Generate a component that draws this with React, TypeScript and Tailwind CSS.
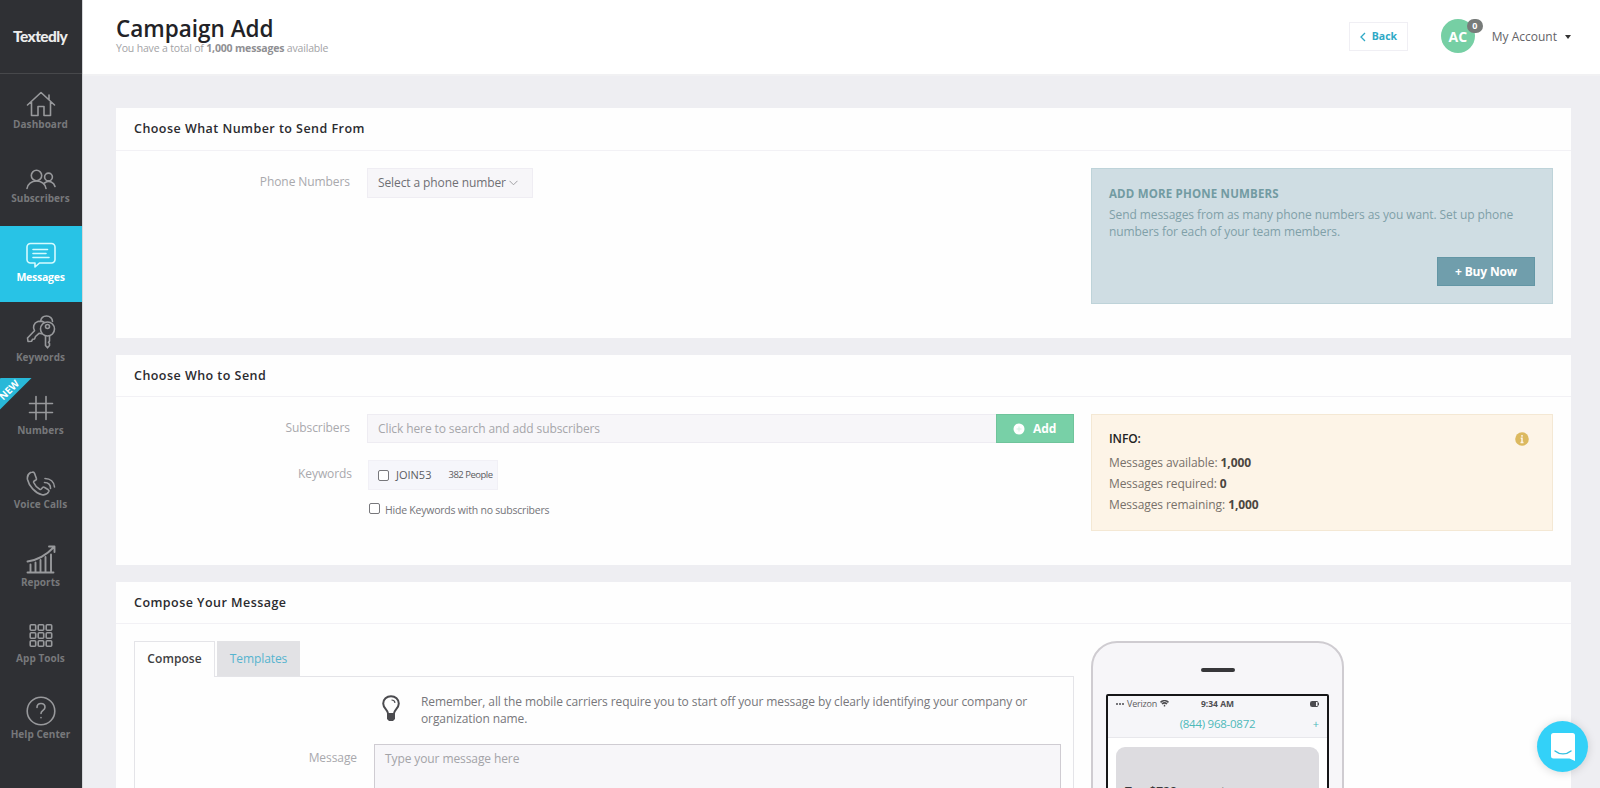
import { ReactNode } from 'react';
import clsx from 'clsx';

type NavItem = {
  label: string;
  icon: ReactNode;
  active?: boolean;
  isNew?: boolean;
  pad: string;
  gap: string;
};

const Line = ({ w = 30, h, sw = 1.6, children }: { w?: number; h: number; sw?: number; children: ReactNode }) => (
  <svg width={w} height={h} viewBox={`0 0 ${w} ${h}`} fill="none" stroke="currentColor" strokeWidth={sw} strokeLinecap="round" strokeLinejoin="round">
    {children}
  </svg>
);

const dots = [0, 8, 16];

const nav: NavItem[] = [
  {
    label: 'Dashboard',
    pad: 'pt-[17px]',
    gap: 'mt-0',
    icon: (
      <Line h={26}>
        <path d="M1.5 14 15 1.5 28.500 14M5.500 11v13.500h6.500v-9h6v9h6.500V11M23 8.500V4" />
      </Line>
    ),
  },
  {
    label: 'Subscribers',
    pad: 'pt-[19px]',
    gap: 'mt-[1px]',
    icon: (
      <Line h={21}>
        <circle cx="10.500" cy="6.500" r="5.200" />
        <circle cx="22.500" cy="8" r="3.900" />
        <path d="M1 19.500c.5-4.500 4.500-7.500 9.500-7.500s9 3 9.500 7.500M18.500 14c5-3.500 9.500-.5 10.500 3.500" />
      </Line>
    ),
  },
  {
    label: 'Messages',
    active: true,
    pad: 'pt-[16px]',
    gap: 'mt-[1px]',
    icon: (
      <Line h={27}>
        <path d="M4.500 1.500h21a3.500 3.500 0 0 1 3.500 3.500v12.500a3.500 3.500 0 0 1-3.500 3.500H13.500l-4.500 4v-4H4.500A3.500 3.500 0 0 1 1 17.500V5a3.500 3.500 0 0 1 3.500-3.500z" />
        <path d="M7 7.500h14.500M7 11.500h13M7 15.500h16" />
      </Line>
    ),
  },
  {
    label: 'Keywords',
    pad: 'pt-[12px]',
    gap: 'mt-[1px]',
    icon: (
      <Line h={35}>
        <circle cx="21.500" cy="15" r="7" />
        <circle cx="21.500" cy="12.500" r="2" />
        <path d="M19.500 22v9.500l2 2.300 2-2.300v-2l-1-1 1-1.500V22M14.500 7.500c.5-3.500 3-5.500 6-5.500 3.500 0 6 2.500 6 5.500M18 8.200C14 6 9 7.500 7.800 11.500c-.6 2-.3 3.500.7 5.200L1.500 24l.5 3.500 3.500-.2 1-2 2-.3 1-2.500 3.500-3.200 2.500.5" />
      </Line>
    ),
  },
  {
    label: 'Numbers',
    isNew: true,
    pad: 'pt-[17px]',
    gap: 'mt-[2px]',
    icon: (
      <Line h={26}>
        <path d="M10 1.500v23M20 1.500v23M3.500 8.500h23M3.500 17.500h23" />
      </Line>
    ),
  },
  {
    label: 'Voice Calls',
    pad: 'pt-[17px]',
    gap: 'mt-[1px]',
    icon: (
      <Line h={25}>
        <path d="M4.500 1.500C2 3 1 5.500 1.500 8.500c1.500 6.500 7.500 13.500 14.500 15.200 3 .6 5.500-.7 6.800-3.200.3-.7.1-1.300-.5-1.700l-4-2.500c-.6-.4-1.300-.3-1.700.2l-1.300 1.500c-.4.5-1 .6-1.600.3-2.700-1.500-4.800-4-6-6.800-.2-.6 0-1.200.5-1.500l1.600-1c.6-.4.8-1 .5-1.700L8.500 2.200c-.4-.9-1.500-1.200-2.300-.9zM18.500 11.500c4 0 6.200 2.200 6 6M19 7.500c5.500 0 9 3.500 9.500 8.500" />
      </Line>
    ),
  },
  {
    label: 'Reports',
    pad: 'pt-[15px]',
    gap: 'mt-[1px]',
    icon: (
      <Line h={29} sw={1.9}>
        <path d="M1.500 27.500h26M4.500 27v-7.500M9.500 27v-9.500M14.500 27V15M19.500 27v-15M25 27V9.500M1.500 16.500C12 15 20 10.500 28 2M23 1.500h5.500V7" />
      </Line>
    ),
  },
  {
    label: 'App Tools',
    pad: 'pt-[17px]',
    gap: 'mt-[3px]',
    icon: (
      <Line h={25}>
        {dots.map((y) => dots.map((x) => <rect key={`${x}-${y}`} x={x + 4.2} y={y + 1.7} width="5.500" height="5.500" rx="1" />))}
      </Line>
    ),
  },
  {
    label: 'Help Center',
    pad: 'pt-[14px]',
    gap: 'mt-[1px]',
    icon: (
      <Line h={30}>
        <circle cx="15" cy="15" r="13.800" />
        <path d="M11 11.500c0-2.500 1.800-4 4-4s4 1.500 4 3.800c0 3-4 3.200-4 6.200M15 21.500v.3" />
      </Line>
    ),
  },
];

function Sidebar() {
  return (
    <aside className="flex h-full w-[83px] shrink-0 flex-col border-r border-[#d5d7da] bg-[#2f3034]">
      <div className="flex h-[74px] shrink-0 items-center border-b border-[#47484b] pl-[13px] pt-[1px]">
        <span className="font-['Lato'] text-[15.5px] font-black tracking-[-0.6px] text-[#ececec]">Textedly</span>
      </div>
      {nav.map((item) => (
        <a
          key={item.label}
          className={clsx(
            'relative flex h-[76px] shrink-0 flex-col items-center overflow-hidden pr-[1px]',
            item.pad,
            item.active ? 'bg-[#28c3e6] text-[#d5fbff]' : 'text-[#98999c]',
          )}
        >
          {item.isNew && (
            <span className="absolute -left-[27px] top-[-3px] flex h-[22px] w-[70px] -rotate-45 items-end justify-center bg-[#28b8d8] pb-[2px] pr-[4px] text-[10px] font-bold leading-[12px] text-white">
              NEW
            </span>
          )}
          {item.icon}
          <span className={clsx('whitespace-nowrap font-bold leading-[15px]', item.gap, item.active ? 'text-[10.5px] tracking-[-0.25px] text-white' : 'text-[10px] tracking-[0.05px] text-[#77787b]')}>
            {item.label}
          </span>
        </a>
      ))}
    </aside>
  );
}

function Header() {
  return (
    <header className="flex h-[74px] shrink-0 items-start bg-white pl-[33px] pr-[29px]">
      <div className="flex-1 pt-[15px]">
        <h1 className="text-[22.5px] font-semibold leading-[27px] text-[#222226]">Campaign Add</h1>
        <p className="-mt-[1px] text-[10.5px] leading-[14px] tracking-[-0.17px] text-[#a3a3a6]">
          You have a total of <b className="text-[#8f8f93]">1,000 messages</b> available
        </p>
      </div>
      <a className="mt-[22px] flex h-[29px] w-[59px] items-center border border-[#f0eff4] pl-[10px] text-[10.5px] font-bold text-[#2fa9c6]">
        <svg width="6" height="10" viewBox="0 0 6 10" fill="none" stroke="currentColor" strokeWidth="1.300" className="mr-[6px]">
          <path d="M5 1 1 5l4 4" />
        </svg>
        Back
      </a>
      <div className="relative ml-[33px] mt-[19px] flex size-[34px] items-center justify-center rounded-full bg-[#76cfa4] text-[14px] font-bold text-white">
        AC
        <span className="absolute top-0 left-[26px] flex h-[14px] w-[16px] items-center justify-center rounded-full bg-[#777b79] text-[9px] font-bold">0</span>
      </div>
      <div className="mt-[28px] flex items-center pl-[17px] text-[12px] leading-[18px] text-[#636367]">
        My Account
        <span className="ml-[8px] border-x-[3.5px] border-t-4 border-x-transparent border-t-[#333]" />
      </div>
    </header>
  );
}

type CardProps = { title: string; className?: string; headClassName?: string; children: ReactNode };

function Card({ title, className, headClassName = 'h-[42px]', children }: CardProps) {
  return (
    <section className={clsx('flex shrink-0 flex-col bg-[#fefefe]', className)}>
      <h2 className={clsx('shrink-0 border-b border-[#f2f1f5] pl-[18px] text-[12.5px] font-semibold leading-[42px] tracking-[0.46px] text-[#2b2b2f]', headClassName)}>{title}</h2>
      <div className="flex pl-[18px] pr-[18px] pt-[17px]">{children}</div>
    </section>
  );
}

function Label({ children, className }: { children: ReactNode; className?: string }) {
  return <label className={clsx('shrink-0 text-right text-[12px] leading-[28px] tracking-[-0.08px] text-[#a9a9ad]', className)}>{children}</label>;
}

const Box = () => <span className="size-[11px] shrink-0 rounded-[2px] border border-[#77777b] bg-white" />;

const stats = [
  ['Messages available:', '1,000'],
  ['Messages required:', '0'],
  ['Messages remaining:', '1,000'],
];

function NumberCard() {
  return (
    <Card title="Choose What Number to Send From" className="h-[230px]" headClassName="h-[43px]">
      <div className="flex w-[957px] items-start">
        <Label className="mr-[17px] w-[216px]">Phone Numbers</Label>
        <button className="flex h-[30px] w-[166px] items-center border border-[#efedf3] bg-[#f7f6f9] pb-[1px] pl-[10px] text-[12px] tracking-[-0.1px] text-[#6f6f74]">
          Select a phone number
          <svg width="9" height="6" viewBox="0 0 9 6" fill="none" stroke="#a0a0a4" className="ml-[3px] mt-[1px]">
            <path d="M.5.8l4 4 4-4" />
          </svg>
        </button>
      </div>
      <div className="flex h-[136px] w-[462px] flex-col border border-[#bed3d9] bg-[#cfdde3] px-[17px] pt-[16px] text-[12px] leading-[17px] tracking-[-0.085px] text-[#7fa0a8]">
        <b className="text-[11.5px] font-bold tracking-[0.18px] text-[#729ba2]">ADD MORE PHONE NUMBERS</b>
        <p className="mt-[4px]">Send messages from as many phone numbers as you want. Set up phone numbers for each of your team members.</p>
        <button className="mt-[17px] h-[29px] w-[98px] self-end border border-[#6396a5] bg-[#709eac] text-[12px] font-bold tracking-[-0.15px] text-white">+ Buy Now</button>
      </div>
    </Card>
  );
}

function RecipientsCard() {
  return (
    <Card title="Choose Who to Send" className="mt-[17px] h-[210px]">
      <div className="flex w-[957px] flex-col">
        <div className="flex">
          <Label className="mr-[17px] w-[216px]">Subscribers</Label>
          <div className="flex h-[29px] w-[629px] items-center border border-r-0 border-[#eeecf2] bg-[#f7f6f9] pl-[10px] text-[12px] tracking-[-0.1px] text-[#a6a6aa]">
            Click here to search and add subscribers
          </div>
          <button className="flex h-[29px] w-[78px] items-center border border-[#6fc49b] bg-[#78d0a7] pl-[16px] text-[12px] font-bold text-white">
            <svg width="12" height="12" viewBox="0 0 12 12" className="mr-[8px]">
              <circle cx="6" cy="6" r="5.500" fill="#fff" />
              <path d="M6 3.500v5M3.500 6h5" stroke="#d3f1e2" />
            </svg>
            Add
          </button>
        </div>
        <div className="mt-[17px] flex">
          <Label className="mr-[16px] w-[218px]">Keywords</Label>
          <div className="flex h-[30px] w-[130px] items-center border border-[#f1f0f6] bg-[#f6f6fb] pl-[9px] text-[11px] text-[#5c5c61]">
            <Box />
            <span className="ml-[7px]">JOIN53</span>
            <span className="ml-[17px] whitespace-nowrap text-[9.5px] tracking-[-0.5px]">382 People</span>
          </div>
        </div>
        <div className="ml-[235px] mt-[13px] flex items-start text-[10.5px] leading-[14px] tracking-[-0.22px] text-[#747479]">
          <Box />
          <span className="ml-[5px]">Hide Keywords with no subscribers</span>
        </div>
      </div>
      <div className="flex h-[117px] w-[462px] justify-between border border-[#f4e8d4] bg-[#fdf4e7] pl-[17px] pr-[23px] pt-[13px] text-[12px] leading-[21px] tracking-[-0.08px] text-[#77716a]">
        <div>
          <p className="mb-[3px] font-semibold text-[#222]">INFO:</p>
          {stats.map(([name, value]) => (
            <p key={name}>
              {name} <b className="text-[#4b4640]">{value}</b>
            </p>
          ))}
        </div>
        <svg width="14" height="18" viewBox="0 0 14 18" className="mt-[2px]">
          <circle cx="7" cy="9" r="6.800" fill="#dcb95f" />
          <path d="M7 5v1.800M5.700 8.200H7v4.300M5.500 12.500h3" stroke="#fdf4e7" strokeWidth="1.500" fill="none" />
        </svg>
      </div>
    </Card>
  );
}

function Phone() {
  return (
    <div className="h-[420px] w-[253px] shrink-0 rounded-[26px] border-2 border-[#cfccd1] bg-[#f7f6f9] px-[13px] pt-[25px]">
      <div className="mx-auto h-[4px] w-[34px] rounded-[2px] bg-[#37373a]" />
      <div className="mt-[22px] h-[340px] rounded-t-[2px] border-2 border-[#161618] bg-white">
        <div className="h-[42px] border-b border-[#e8e8ec] bg-[#f6f6f9] px-[8px]">
          <div className="grid grid-cols-3 items-center text-[9px] leading-[15px] text-[#5c5c60]">
            <span className="flex items-center whitespace-nowrap">
              <svg width="8" height="4" viewBox="0 0 8 4" className="mr-[3px]" fill="#4b4b4f">
                <circle cx="1" cy="2" r="1" />
                <circle cx="4" cy="2" r="1" />
                <circle cx="7" cy="2" r="1" />
              </svg>
              <span className="tracking-[-0.2px]">Verizon</span>
              <svg width="9" height="7" viewBox="0 0 9 7" className="ml-[3px]" fill="none" stroke="#4b4b4f" strokeWidth="1.600">
                <path d="M.5 2.300c2.300-2.100 5.700-2.100 8 0M2 4c1.500-1.300 3.500-1.300 5 0M3.800 5.600h1.400" />
              </svg>
            </span>
            <b className="text-center text-[8.5px] text-[#4f4f53]">9:34 AM</b>
            <svg width="9" height="6" viewBox="0 0 9 6" className="justify-self-end">
              <rect x=".5" y=".5" width="7.500" height="5" rx="1" fill="none" stroke="#4b4b4f" />
              <path d="M1 1h5v4H1zM8 2h1v2H8z" fill="#4b4b4f" />
            </svg>
          </div>
          <div className="grid grid-cols-[1fr_auto_1fr] pt-[4px] text-[11.5px] leading-[18px] text-[#4db9b9]">
            <span />
            <span className="tracking-[-0.25px]">(844) 968-0872</span>
            <span className="text-right text-[11px]">+</span>
          </div>
        </div>
        <div className="mx-[8px] mt-[9px] h-[120px] rounded-[9px] bg-[#dddce0] px-[9px] pt-[36px] text-[12px] font-semibold leading-[18px] text-[#38383b]">Tap $728 support</div>
      </div>
    </div>
  );
}

function ComposeCard() {
  return (
    <Card title="Compose Your Message" className="mt-[17px] h-[500px]">
      <div className="mr-[17px] w-[940px] shrink-0">
        <div className="relative z-10 -mb-[1px] flex">
          <b className="flex h-[36px] w-[81px] items-center justify-center border border-b-0 border-[#e4e4e8] bg-[#fefefe] pb-[2px] text-[12px] font-semibold tracking-[0.05px] text-[#3e3e42]">Compose</b>
          <span className="ml-[2px] flex h-[35px] w-[83px] items-center justify-center bg-[#e2e2e5] text-[12px] tracking-[-0.1px] text-[#56b4cf]">Templates</span>
        </div>
        <div className="h-[400px] border border-[#e4e4e8] pt-[16px]">
          <div className="flex pl-[247px]">
            <svg width="18" height="27" viewBox="0 0 18 27" className="mt-[2px]" fill="none" stroke="#4b4b4f" strokeWidth="2">
              <path d="M6 18.500c0-3.500-4.800-5-4.800-10C1.200 4.300 4.700 1.200 9 1.200s7.800 3.100 7.800 7.300c0 5-4.800 6.500-4.800 10" />
              <path d="M5 18h8v6l-2 2H7l-2-2z" fill="#4b4b4f" stroke="none" />
              <path d="M9.500 5c2 0 3.200 1 3.500 2.800" strokeWidth="1.200" />
            </svg>
            <p className="ml-[21px] w-[630px] text-[12px] leading-[17px] tracking-[-0.095px] text-[#77777b]">
              Remember, all the mobile carriers require you to start off your message by clearly identifying your company or organization name.
            </p>
          </div>
          <div className="mt-[17px] flex">
            <Label className="mr-[17px] w-[222px]">Message</Label>
            <div className="h-[200px] w-[687px] border border-[#cfccd2] bg-[#f7f6f9] px-[10px] pt-[5px] text-[12px] leading-[18px] tracking-[-0.1px] text-[#a3a3a7]">Type your message here</div>
          </div>
        </div>
      </div>
      <Phone />
    </Card>
  );
}

export default function App() {
  return (
    <div className="relative flex h-[788px] w-[1600px] overflow-hidden bg-[#eeeef2] font-['Open_Sans',sans-serif]">
      <Sidebar />
      <main className="flex min-w-0 flex-1 flex-col overflow-hidden">
        <Header />
        <div className="flex min-h-0 flex-1 flex-col overflow-hidden border-t-2 border-[#f1f1f3] pl-[33px] pr-[29px] pt-[32px]">
          <NumberCard />
          <RecipientsCard />
          <ComposeCard />
        </div>
      </main>

      {/* Chat launcher */}
      <button className="absolute left-[1537px] top-[721px] flex size-[51px] items-center justify-center rounded-full bg-[#33d1f8] shadow-[0_1px_10px_rgba(0,0,0,0.15)]">
        <svg width="24" height="28" viewBox="0 0 24 28">
          <path d="M2.500 0h19A2.500 2.500 0 0 1 24 2.500V28l-5.500-2.500h-16A2.500 2.500 0 0 1 0 23V2.500A2.500 2.500 0 0 1 2.500 0z" fill="#fff" />
          <path d="M4 18c4.500 3.800 11.500 3.800 16 0" fill="none" stroke="#33bfe0" strokeWidth="1.400" strokeLinecap="round" />
        </svg>
      </button>
    </div>
  );
}
